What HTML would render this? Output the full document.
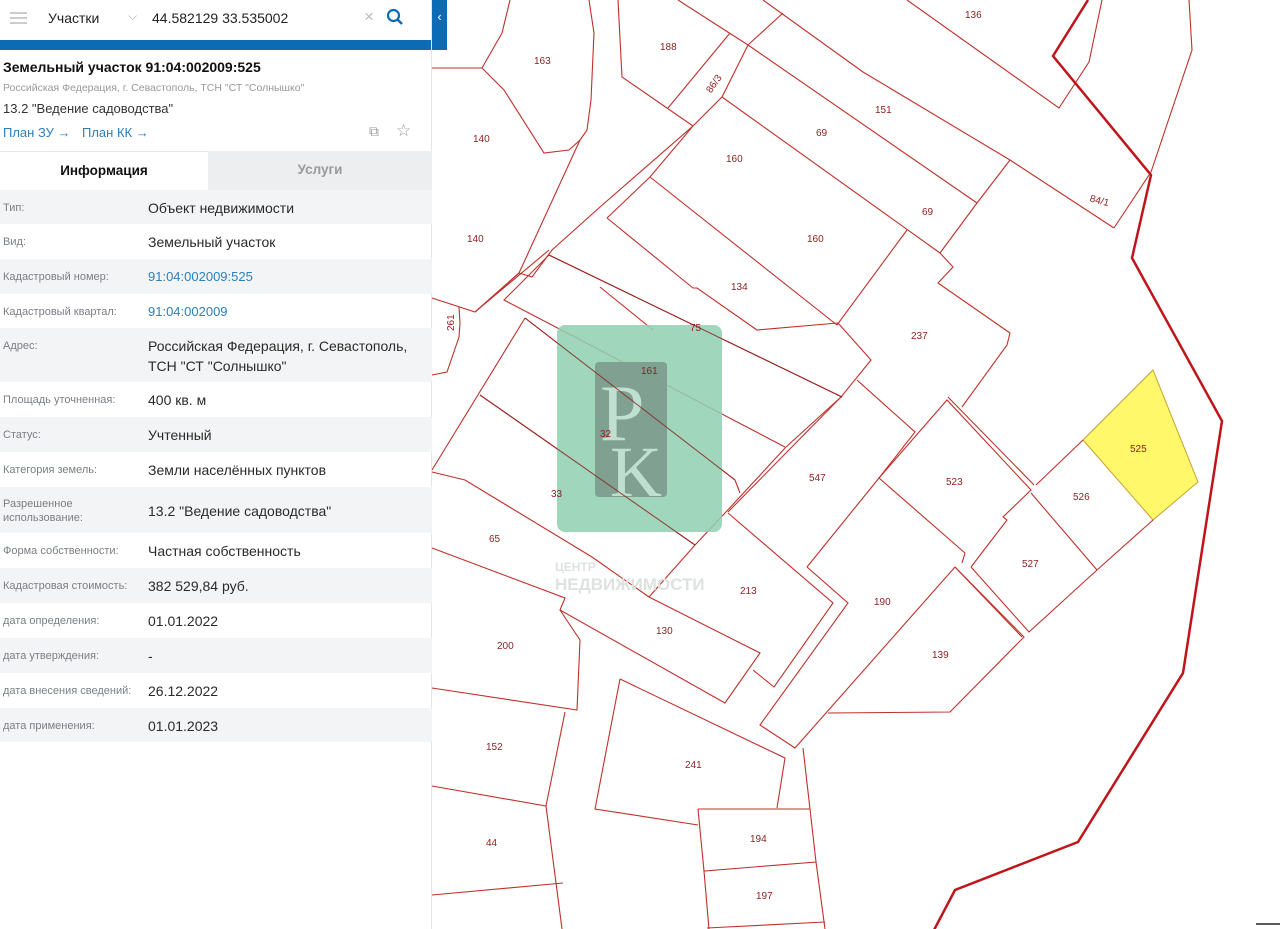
<!DOCTYPE html>
<html><head><meta charset="utf-8"><style>
*{margin:0;padding:0;box-sizing:border-box}
body{width:1280px;height:929px;overflow:hidden;background:#fff;font-family:"Liberation Sans","DejaVu Sans",sans-serif;position:relative}
#map{position:absolute;left:0;top:0}
.panel{position:absolute;left:0;top:0;width:432px;height:929px;background:#fff;border-right:1px solid #e4e6e8}
.top{height:40px;background:#fff;position:relative}
.blue{height:10px;background:#0c6bb5}
.tab{position:absolute;left:432px;top:0;width:15px;height:50px;background:#0c6bb5;color:#fff;font-size:13px;text-align:center;line-height:34px}
.t{position:absolute;font-size:14px;color:#222}
.row{position:absolute;left:0;width:432px}
.row .k{position:absolute;left:3px;top:11px;font-size:11px;color:#7a7f85;line-height:14px}
.row .v{position:absolute;left:148px;top:8px;font-size:14px;color:#2a2a2a;line-height:20px}
.g{background:#f3f4f5}
.lbl{font-size:10px;fill:#8a1f1f;font-family:"Liberation Sans",sans-serif}
</style></head><body>
<svg id="map" width="1280" height="929">
<polygon points="1083,440 1153,370 1198,482 1153,520" fill="#fff86a" stroke="#c9a030" stroke-width="1"/>
<g fill="none" stroke="#c0302a" stroke-width="1.1">
<polyline points="510,0 502,33 482,68 432,68"/>
<polyline points="482,68 504,90 544,153 569,150 580,140 587,130 591,100 594,33 589,0"/>
<polyline points="580,140 519,273 475,312 432,298"/>
<polyline points="475,312 549,250"/>
<polyline points="475,312 519,273 532,277 552,250 600,207 693,126"/>
<polyline points="618,0 622,77 693,126"/>
<polyline points="678,0 748,45 977,203"/>
<polyline points="763,0 863,72 1010,160 1114,228"/>
<polyline points="783,13 748,45"/>
<polyline points="907,0 1059,108 1089,62 1102,0"/>
<polyline points="1189,0 1192,50 1151,172 1114,228"/>
<polyline points="730,33 668,108"/>
<polyline points="748,45 722,97 693,126 650,177 607,218"/>
<polyline points="722,97 940,253"/>
<polyline points="1010,160 977,203 940,253"/>
<polyline points="650,177 837,325 907,230"/>
<polyline points="607,218 693,288 697,288 757,330 838,323"/>
<polyline points="600,287 653,330"/>
<polyline points="940,253 953,267 938,283 1010,333 1007,345 962,407"/>
<polyline points="549,255 842,397"/>
<polyline points="838,323 871,360 841,397 786,447"/>
<polyline points="549,255 504,300 785,447"/>
<polyline points="525,318 735,480 740,493"/>
<polyline points="525,318 432,470"/>
<polyline points="480,395 695,545"/>
<polyline points="432,472 465,480 592,557 649,597 695,545 725,513 786,447"/>
<polyline points="857,380 915,432 879,478 807,567"/>
<polyline points="841,397 728,512"/>
<polyline points="728,513 833,603 774,687 753,670"/>
<polyline points="432,548 565,598 560,610 725,703 760,653 649,597"/>
<polyline points="807,567 848,603 760,725 795,748 955,567"/>
<polyline points="879,478 947,400 1031,490 1003,517 1007,520 971,567"/>
<polyline points="948,397 1034,485"/>
<polyline points="879,478 965,553 962,563"/>
<polyline points="1036,485 1083,440"/>
<polyline points="1153,520 1097,570 1029,632 971,567"/>
<polyline points="1031,493 1097,570"/>
<polyline points="955,567 1022,637"/>
<polyline points="955,567 1024,637 950,712 828,713"/>
<polyline points="560,610 580,640 577,710 432,688"/>
<polyline points="565,712 546,806 432,786"/>
<polyline points="546,806 562,929"/>
<polyline points="432,895 563,883"/>
<polyline points="620,679 785,758 777,808"/>
<polyline points="620,679 595,809 698,825"/>
<polyline points="698,809 810,809 816,862 704,871 698,809"/>
<polyline points="704,871 709,929"/>
<polyline points="816,862 825,929"/>
<polyline points="707,928 825,922"/>
<polyline points="803,748 810,809"/>
<polyline points="432,375 447,372 459,337 460,323 459,307"/>
</g>
<polyline points="1088,0 1053,56 1151,175 1132,258 1222,421 1183,673 1078,842 955,890 934,930" fill="none" stroke="#c0141a" stroke-width="2.5"/>
<rect x="557" y="325" width="165" height="207" rx="8" fill="#8fd0b0" opacity="0.85"/>
<rect x="595" y="362" width="72" height="135" rx="4" fill="#7c9a8c" opacity="0.9"/>
<text x="600" y="440" font-size="80" fill="#bfe0d0" font-family="Liberation Serif,serif">P</text>
<text x="610" y="496" font-size="72" fill="#bfe0d0" font-family="Liberation Serif,serif">K</text>
<g stroke="#8a1f1f" stroke-width="1" opacity="0.8"><line x1="525" y1="318" x2="735" y2="480"/><line x1="480" y1="395" x2="695" y2="545"/><line x1="549" y1="255" x2="842" y2="397"/></g>
<text x="555" y="571" font-size="12" fill="#dde2df" font-weight="bold">ЦЕНТР</text>
<text x="555" y="590" font-size="17" fill="#dde2df" font-weight="bold">НЕДВИЖИМОСТИ</text>
<g class="lbl">
<text x="965" y="18">136</text><text x="660" y="50">188</text><text x="534" y="64">163</text>
<text x="706" y="92" transform="rotate(-55 710 88)">86/3</text>
<text x="875" y="113">151</text><text x="473" y="142">140</text><text x="816" y="136">69</text>
<text x="726" y="162">160</text><text x="1090" y="204" transform="rotate(15 1100 200)">84/1</text>
<text x="922" y="215">69</text><text x="467" y="242">140</text><text x="807" y="242">160</text>
<text x="731" y="290">134</text><text x="451" y="340" transform="rotate(-90 448 334)">261</text>
<text x="690" y="331">75</text><text x="911" y="339">237</text><text x="641" y="374">161</text>
<text x="600" y="437">32</text><text x="1130" y="452">525</text><text x="809" y="481">547</text>
<text x="946" y="485">523</text><text x="551" y="497">33</text><text x="1073" y="500">526</text>
<text x="489" y="542">65</text><text x="1022" y="567">527</text><text x="740" y="594">213</text>
<text x="874" y="605">190</text><text x="656" y="634">130</text><text x="497" y="649">200</text>
<text x="932" y="658">139</text><text x="486" y="750">152</text><text x="685" y="768">241</text>
<text x="750" y="842">194</text><text x="486" y="846">44</text><text x="756" y="899">197</text>
</g>
<line x1="1256" y1="924" x2="1280" y2="924" stroke="#222" stroke-width="1.5"/>
</svg>
<div class="panel">
<div class="top">
<div style="position:absolute;left:10px;top:12px;width:17px;height:2px;background:#ccc;box-shadow:0 5px 0 #ccc,0 10px 0 #ccc"></div>
<div class="t" style="left:48px;top:10px;font-size:14px">Участки</div>
<div style="position:absolute;left:128px;top:9px;color:#aaa;font-size:12px">⌵</div>
<div class="t" style="left:152px;top:10px;font-size:14px">44.582129 33.535002</div>
<div style="position:absolute;left:364px;top:7px;color:#bbb;font-size:17px">×</div>
<svg style="position:absolute;left:386px;top:8px" width="18" height="18"><circle cx="7.5" cy="7.5" r="5.5" fill="none" stroke="#0c6bb5" stroke-width="2.2"/><line x1="11.5" y1="11.5" x2="16" y2="16" stroke="#0c6bb5" stroke-width="2.4"/></svg>
</div>
<div class="blue"></div>
<div class="t" style="left:3px;top:59px;font-weight:bold;font-size:14px;color:#111">Земельный участок 91:04:002009:525</div>
<div class="t" style="left:3px;top:82px;font-size:10.5px;color:#999">Российская Федерация, г. Севастополь, ТСН "СТ "Солнышко"</div>
<div class="t" style="left:3px;top:101px;font-size:13px;color:#333">13.2 "Ведение садоводства"</div>
<div class="t" style="left:3px;top:125px;font-size:13px;color:#2a7fbf">План ЗУ →</div>
<div class="t" style="left:82px;top:125px;font-size:13px;color:#2a7fbf">План КК →</div>
<div class="t" style="left:369px;top:123px;font-size:14px;color:#999">⧉</div>
<div class="t" style="left:396px;top:121px;font-size:17px;color:#999">☆</div>
<div style="position:absolute;left:0;top:151px;width:208px;height:39px;background:#fff;border-top:1px solid #e8e8e8;font-weight:bold;font-size:13.5px;text-align:center;line-height:38px;color:#111">Информация</div>
<div style="position:absolute;left:208px;top:151px;width:224px;height:39px;background:#eceeef;font-weight:bold;font-size:13.5px;text-align:center;line-height:38px;color:#9a9a9a">Услуги</div>
<div class="row g" style="top:190px;height:34px"><div class="k">Тип:</div><div class="v">Объект недвижимости</div></div>
<div class="row" style="top:224px;height:35px"><div class="k">Вид:</div><div class="v">Земельный участок</div></div>
<div class="row g" style="top:259px;height:35px"><div class="k">Кадастровый номер:</div><div class="v" style="color:#2a7fbf;font-size:13px">91:04:002009:525</div></div>
<div class="row" style="top:294px;height:34px"><div class="k">Кадастровый квартал:</div><div class="v" style="color:#2a7fbf;font-size:13px">91:04:002009</div></div>
<div class="row g" style="top:328px;height:54px"><div class="k">Адрес:</div><div class="v">Российская Федерация, г. Севастополь,<br>ТСН "СТ "Солнышко"</div></div>
<div class="row" style="top:382px;height:35px"><div class="k">Площадь уточненная:</div><div class="v">400 кв. м</div></div>
<div class="row g" style="top:417px;height:35px"><div class="k">Статус:</div><div class="v">Учтенный</div></div>
<div class="row" style="top:452px;height:35px"><div class="k">Категория земель:</div><div class="v">Земли населённых пунктов</div></div>
<div class="row g" style="top:487px;height:46px"><div class="k" style="top:10px">Разрешенное<br>использование:</div><div class="v" style="top:14px">13.2 "Ведение садоводства"</div></div>
<div class="row" style="top:533px;height:35px"><div class="k">Форма собственности:</div><div class="v">Частная собственность</div></div>
<div class="row g" style="top:568px;height:35px"><div class="k">Кадастровая стоимость:</div><div class="v">382 529,84 руб.</div></div>
<div class="row" style="top:603px;height:35px"><div class="k">дата определения:</div><div class="v">01.01.2022</div></div>
<div class="row g" style="top:638px;height:35px"><div class="k">дата утверждения:</div><div class="v">-</div></div>
<div class="row" style="top:673px;height:35px"><div class="k">дата внесения сведений:</div><div class="v">26.12.2022</div></div>
<div class="row g" style="top:708px;height:34px"><div class="k">дата применения:</div><div class="v">01.01.2023</div></div>
</div>
<div class="tab">‹</div>
</body></html>
